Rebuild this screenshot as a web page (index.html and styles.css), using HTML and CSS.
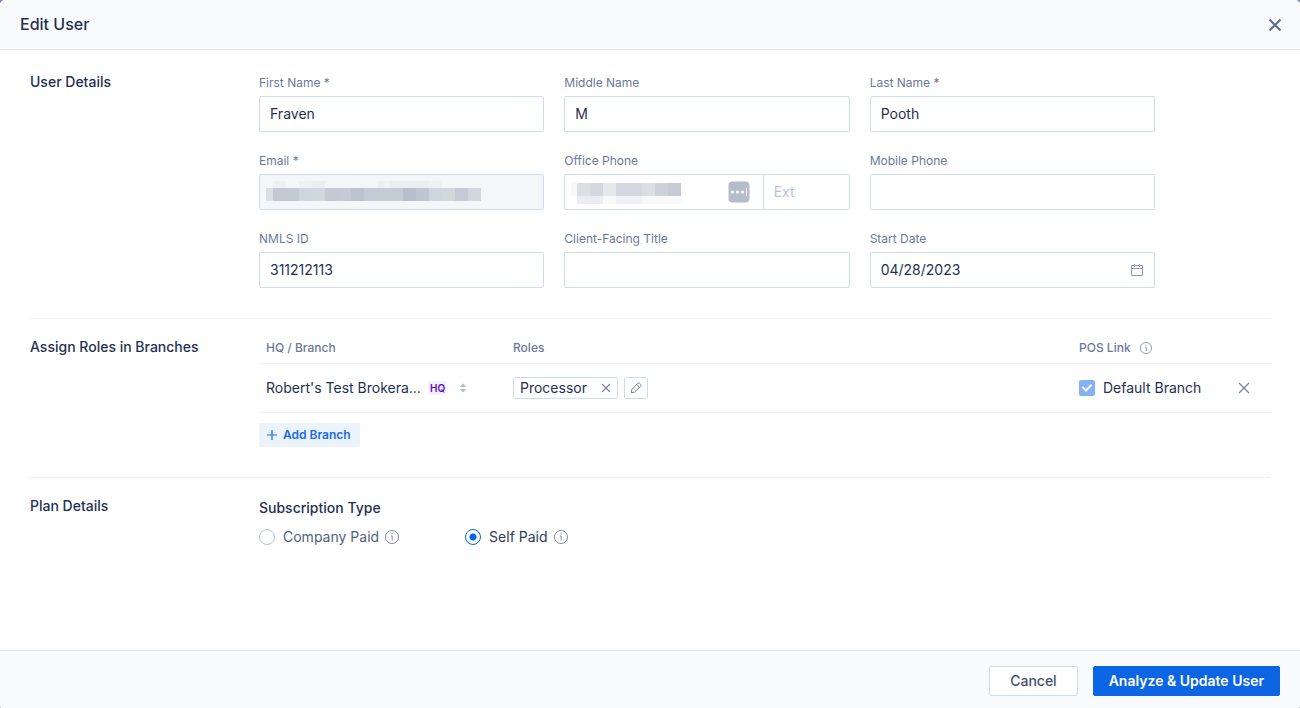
FILE: index.html
```html
<!DOCTYPE html>
<html lang="en">
<head>
  <meta charset="UTF-8">
  <meta name="viewport" content="width=device-width, initial-scale=1.0">
  <title>Edit User</title>
  <link rel="stylesheet" href="styles.css">
</head>
<body>
  <form class="modal">
    <header class="modal-header">
      <h1>Edit User</h1>
      <button type="button" class="icon-button" aria-label="Close">
        <svg width="14" height="14" viewBox="0 0 14 14" fill="none" stroke="#5f6f8f" stroke-width="2.2"><path d="M1.5 1.5l11 11M12.5 1.5l-11 11"/></svg>
      </button>
    </header>

    <main class="modal-body">
      <section class="section user-details">
        <h2>User Details</h2>
        <div class="fields">
          <div class="field">
            <label for="firstName">First Name *</label>
            <input type="text" id="firstName" value="Fraven">
          </div>
          <div class="field">
            <label for="middleName">Middle Name</label>
            <input type="text" id="middleName" value="M">
          </div>
          <div class="field">
            <label for="lastName">Last Name *</label>
            <input type="text" id="lastName" value="Pooth">
          </div>
          <div class="field">
            <label for="email">Email *</label>
            <div class="input-wrap">
              <input type="email" id="email" disabled>
              <!-- redacted address -->
              <svg class="redacted" width="215" height="20" viewBox="0 0 215 20" shape-rendering="crispEdges">
                <path fill="#eff2f5" d="M7 0h13v7H7zM33 0h13v7H33zM111 0h13v7h-13zM163 0h13v7h-13z"/>
                <path fill="#ebeef1" d="M46 0h13v7H46zM124 0h39v7h-39z"/>
                <path fill="#dadee5" d="M0 7h7v13H0z"/>
                <path fill="#c4c9d4" d="M7 7h26v13H7zM59 7h13v13H59z"/>
                <path fill="#cfd5de" d="M33 7h13v13H33zM163 7h13v13h-13z"/>
                <path fill="#d2d6dd" d="M46 7h13v13H46zM176 7h13v13h-13zM202 7h13v13h-13z"/>
                <path fill="#c5cad6" d="M72 7h13v13H72zM98 7h13v13H98zM189 7h13v13h-13z"/>
                <path fill="#bcc2ce" d="M85 7h13v13H85z"/>
                <path fill="#c5cbd3" d="M111 7h26v13h-26z"/>
                <path fill="#b8becd" d="M137 7h13v13h-13z"/>
                <path fill="#c0c6d1" d="M150 7h13v13h-13z"/>
              </svg>
            </div>
          </div>
          <div class="field">
            <label for="officePhone">Office Phone</label>
            <div class="input-wrap phone">
              <input type="tel" id="officePhone">
              <input type="text" class="ext" placeholder="Ext" aria-label="Extension">
              <!-- redacted number -->
              <svg class="redacted" width="111" height="24" viewBox="0 -2 111 24" shape-rendering="crispEdges">
                <path fill="#f8f8fa" d="M0 0h6v13H0zM32 13h13v8H32zM71 13h39v8H71z"/>
                <path fill="#dbdee2" d="M6 0h13v13H6zM71 0h13v13H71z"/>
                <path fill="#d4d7e0" d="M19 0h13v13H19zM45 0h13v13H45zM58 0h13v13H58z"/>
                <path fill="#e6e8ec" d="M32 0h13v13H32z"/>
                <path fill="#cdd1d9" d="M84 0h13v13H84z"/>
                <path fill="#c6cad5" d="M97 0h13v13H97z"/>
                <path fill="#ebecf1" d="M6 13h26v8H6z"/>
                <path fill="#f0f1f5" d="M45 13h26v8H45z"/>
              </svg>
              <svg class="autofill" width="22" height="22" viewBox="0 0 22 22"><rect x=".5" y=".5" width="21" height="21" rx="4" fill="#b6bdc9"/><g fill="#fff"><circle cx="4.5" cy="11" r="1.5"/><circle cx="9.5" cy="11" r="1.5"/><circle cx="14.5" cy="11" r="1.5"/><path d="M18 7h1v8h-1z"/></g></svg>
            </div>
          </div>
          <div class="field">
            <label for="mobilePhone">Mobile Phone</label>
            <input type="tel" id="mobilePhone">
          </div>
          <div class="field">
            <label for="nmlsId">NMLS ID</label>
            <input type="text" id="nmlsId" value="311212113">
          </div>
          <div class="field">
            <label for="clientTitle">Client-Facing Title</label>
            <input type="text" id="clientTitle">
          </div>
          <div class="field">
            <label for="startDate">Start Date</label>
            <div class="input-wrap">
              <input type="text" id="startDate" value="04/28/2023">
              <svg class="calendar" width="12" height="12" viewBox="0 0 12 12" fill="none" stroke="#8d9bb8"><path d="M.5 1.5h11v10H.5zM.5 4.5h11M3.5 0v3M8.5 0v3"/></svg>
            </div>
          </div>
        </div>
      </section>

      <section class="section">
        <h2>Assign Roles in Branches</h2>
        <div class="branches">
          <table>
            <thead>
              <tr>
                <th class="col-branch">HQ / Branch</th>
                <th>Roles</th>
                <th class="col-pos">
                  <div class="cell">
                    POS Link
                    <svg class="info" width="12" height="12" viewBox="0 0 14 14"><use href="#info"/></svg>
                  </div>
                </th>
                <th class="col-remove"></th>
              </tr>
            </thead>
            <tbody>
              <tr>
                <td>
                  <div class="cell">
                    <select class="branch-select" aria-label="Branch">
                      <option>Robert's Test Brokera...</option>
                    </select>
                    <span class="badge">HQ</span>
                    <svg class="sorter" width="8" height="10" viewBox="0 0 8 10" fill="#b4bfd6"><path d="M.5 4L4 .5 7.5 4zM.5 6L4 9.5 7.5 6z"/></svg>
                  </div>
                </td>
                <td>
                  <div class="cell">
                    <span class="tag">
                      Processor
                      <button type="button" class="icon-button" aria-label="Remove role">
                        <svg width="10" height="10" viewBox="0 0 10 10" fill="none" stroke="#7283a6" stroke-width="1.1"><path d="M1 1l8 8M9 1l-8 8"/></svg>
                      </button>
                    </span>
                    <button type="button" class="edit-button" aria-label="Edit roles">
                      <svg width="12" height="12" viewBox="0 0 12 12" fill="none" stroke="#6f80a4" stroke-linejoin="round"><path d="M1.2 10.8l.7-3.5 5.6-5.8c.7-.7 1.7-.7 2.4 0l.6.6c.7.7.7 1.7 0 2.4L4.7 10.1zM6.7 2.5l2.9 2.9"/></svg>
                    </button>
                  </div>
                </td>
                <td>
                  <label class="check">
                    <input type="checkbox" checked disabled>
                    Default Branch
                  </label>
                </td>
                <td>
                  <button type="button" class="icon-button" aria-label="Remove branch">
                    <svg width="16" height="16" viewBox="0 0 16 16" fill="none" stroke="#7283a6" stroke-width="1.3"><path d="M3 3l10 10M13 3L3 13"/></svg>
                  </button>
                </td>
              </tr>
            </tbody>
          </table>
          <button type="button" class="add-button">
            <svg width="10" height="10" viewBox="0 0 10 10" fill="none" stroke="#1a6ae8" stroke-width="1.2"><path d="M5 0v10M0 5h10"/></svg>
            Add Branch
          </button>
        </div>
      </section>

      <section class="section">
        <h2>Plan Details</h2>
        <div class="plan">
          <h3>Subscription Type</h3>
          <div class="options">
            <div class="option">
              <label><input type="radio" name="plan"> Company Paid</label>
              <svg class="info" width="14" height="14" viewBox="0 0 14 14"><use href="#info"/></svg>
            </div>
            <div class="option">
              <label><input type="radio" name="plan" checked> Self Paid</label>
              <svg class="info" width="14" height="14" viewBox="0 0 14 14">
                <g id="info" fill="none" stroke="#7d8dad">
                  <circle cx="7" cy="7" r="6.5"/>
                  <path d="M6 6h1.200v4.500M7 3v1.400"/>
                </g>
              </svg>
            </div>
          </div>
        </div>
      </section>
    </main>

    <footer class="modal-footer">
      <button type="button" class="button">Cancel</button>
      <button type="submit" class="button primary">Analyze &amp; Update User</button>
    </footer>
  </form>
</body>
</html>
```
FILE: styles.css
```css
* {
  box-sizing: border-box;
}

body {
  margin: 0;
  background-color: #7f8bb0;
  color: #1f3152;
  font-family: Inter, "Liberation Sans", sans-serif;
  font-size: 14px;
  line-height: 20px;
}

h1, h2, h3 {
  margin: 0;
  font-size: 14px;
  font-weight: 500;
}

button, input, select {
  font: inherit;
  color: inherit;
}

button {
  cursor: pointer;
}

svg {
  display: block;
  flex: none;
}

.modal {
  display: flex;
  flex-direction: column;
  min-height: 100vh;
  background-color: white;
  border-radius: 5px 5px 2px 2px;
  overflow: hidden;
}

.modal-header {
  display: flex;
  justify-content: space-between;
  align-items: center;
  height: 50px;
  padding: 0 18px 0 20px;
  background-color: #f9fafc;
  border-bottom: 1px solid #dfe6ef;
}

.modal-header h1 {
  padding-bottom: 2px;
  font-size: 16px;
}

.modal-body {
  flex: 1;
  padding: 0 30px;
}

.icon-button {
  display: block;
  padding: 0;
  border: none;
  background: none;
}

.section {
  display: grid;
  grid-template-columns: 229px minmax(0, 1fr);
  padding: 18px 0 30px;
}

.section + .section {
  border-top: 1px solid #f0f2f5;
}

.user-details {
  padding-top: 22px;
}

/* User details */

.fields {
  display: grid;
  grid-template-columns: repeat(3, minmax(0, 1fr));
  gap: 20px;
  max-width: 896px;
  margin-top: 2px;
}

.field label {
  display: block;
  margin-bottom: 4px;
  font-size: 12px;
  line-height: 18px;
  color: #6b7a99;
}

.field input {
  display: block;
  width: 100%;
  height: 36px;
  padding: 0 10px 2px;
  border: 1px solid #d0dcec;
  border-radius: 2px;
  background-color: white;
}

.field input:disabled {
  background-color: #f4f7fa;
}

.field input::placeholder {
  color: #b8c5de;
  opacity: 1;
}

.input-wrap {
  position: relative;
}

.phone {
  display: flex;
}

.phone .ext {
  width: 86px;
  border-left: none;
  border-radius: 0 2px 2px 0;
}

.phone input:first-child {
  flex: 1;
  width: auto;
  min-width: 0;
  border-radius: 2px 0 0 2px;
}

.redacted {
  position: absolute;
  top: 7px;
  left: 7px;
}

.autofill {
  position: absolute;
  top: 7px;
  right: 100px;
}

.calendar {
  position: absolute;
  top: 12px;
  right: 12px;
}

/* Branches */

.branches {
  margin-top: -4px;
}

table {
  width: 100%;
  border-collapse: collapse;
  table-layout: fixed;
}

th, td {
  padding: 0 7px;
  border-bottom: 1px solid #f0f2f5;
  text-align: left;
}

th {
  height: 30px;
  font-size: 12px;
  font-weight: 500;
  color: #6b7a99;
}

td {
  height: 49px;
}

.col-branch {
  width: 247px;
}

.col-pos {
  width: 157px;
}

.col-remove {
  width: 41px;
}

.cell {
  display: flex;
  align-items: center;
}

.cell .info {
  margin-left: 9px;
}

.branch-select {
  width: 157px;
  padding: 0;
  border: none;
  background: none;
  appearance: none;
}

.badge {
  margin-left: 5px;
  padding: 0 2px;
  border-radius: 2px;
  background-color: #f5f0fe;
  color: #5b0fd6;
  font-size: 10px;
  font-weight: 600;
  line-height: 14px;
}

.sorter {
  margin-left: 12px;
}

.tag {
  display: flex;
  align-items: center;
  gap: 14px;
  height: 22px;
  padding: 0 6px;
  border: 1px solid #d0dcec;
  border-radius: 2px;
}

.edit-button {
  display: flex;
  align-items: center;
  justify-content: center;
  width: 24px;
  height: 22px;
  margin-left: 6px;
  padding: 0;
  border: 1px solid #d0dcec;
  border-radius: 2px;
  background-color: white;
}

.check {
  display: flex;
  align-items: center;
  gap: 8px;
}

.check input {
  position: relative;
  width: 16px;
  height: 16px;
  margin: 0;
  border-radius: 2px;
  background-color: #85b1f5;
  appearance: none;
}

.check input:checked::after {
  content: "";
  position: absolute;
  top: 2px;
  left: 5px;
  width: 4px;
  height: 7px;
  border: solid white;
  border-width: 0 2px 2px 0;
  transform: rotate(45deg);
}

.add-button {
  display: flex;
  align-items: center;
  gap: 6px;
  height: 24px;
  margin-top: 10px;
  padding: 0 9px 0 8px;
  border: none;
  border-radius: 2px;
  background-color: #ebf3fd;
  color: #1a6ae8;
  font-size: 12px;
  font-weight: 600;
}

/* Plan */

.plan {
  margin-top: 2px;
}

.options {
  display: flex;
  gap: 66px;
  margin-top: 9px;
}

.option {
  display: flex;
  align-items: center;
  gap: 6px;
}

.option label {
  display: flex;
  align-items: center;
  gap: 8px;
  color: #4f5f7c;
}

.option label:has(:checked) {
  color: #2c3e5d;
}

.option input {
  width: 16px;
  height: 16px;
  margin: 0;
  border: 1px solid #b4c3dc;
  border-radius: 50%;
  appearance: none;
}

.option input:checked {
  border-color: #0c66e4;
  background: radial-gradient(#0c66e4 3px, white 4px);
}

/* Footer */

.modal-footer {
  display: flex;
  justify-content: flex-end;
  gap: 15px;
  padding: 15px 20px 12px;
  background-color: #f9fafc;
  border-top: 1px solid #dfe6ef;
}

.button {
  height: 30px;
  padding: 0 20px;
  border: 1px solid #d0dcec;
  border-radius: 2px;
  background-color: white;
  color: #42526e;
  font-weight: 500;
}

.button.primary {
  padding: 0 15px;
  border-color: #0c66e4;
  background-color: #0c66e4;
  color: white;
  font-weight: 600;
}
```
